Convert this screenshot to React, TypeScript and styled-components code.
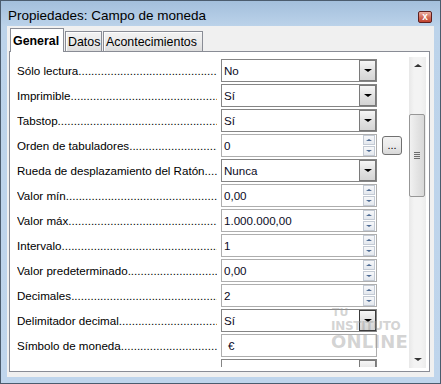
import styled, { createGlobalStyle, css } from 'styled-components';

const GlobalStyle = createGlobalStyle`
  html, body {
    margin: 0;
    padding: 0;
    background: #ffffff;
  }
  * {
    box-sizing: border-box;
  }
`;

const FONT = `'Liberation Sans', Arial, sans-serif`;

const Window = styled.div`
  width: 441px;
  height: 384px;
  border: 1px solid #4b5c6e;
  background: linear-gradient(#a3bfdc 0px, #bcd3ea 26px, #bfd5ec 100%);
  display: flex;
  flex-direction: column;
  font-family: ${FONT};
  font-size: 11.6px;
  color: #000;
  overflow: hidden;
`;

const TitleBar = styled.div`
  height: 25px;
  flex-shrink: 0;
  display: flex;
  align-items: center;
  padding: 0 8px 0 7px;
`;

const Title = styled.span`
  flex: 1;
  font-size: 13.5px;
  color: #000;
  padding-top: 4px;
`;

const CloseButton = styled.div`
  width: 14px;
  height: 12px;
  margin-top: 6px;
  border: 1px solid #5d1f1f;
  border-radius: 2px;
  background: linear-gradient(#eab0a4, #d26a56 55%, #c0432f);
  color: #fff;
  font-size: 10px;
  font-weight: bold;
  line-height: 10px;
  text-align: center;
`;

const Client = styled.div`
  flex: 1;
  min-height: 0;
  margin: 0 6px 6px 6px;
  background: #f0f0f0;
  padding: 2px 4px 5px 2px;
  display: flex;
  flex-direction: column;
`;

const Tabs = styled.div`
  display: flex;
  align-items: flex-end;
  height: 23px;
  flex-shrink: 0;
  padding-left: 1px;
  position: relative;
  z-index: 1;
`;

const Tab = styled.div<{ $active?: boolean; $w: number }>`
  width: ${({ $w }) => $w}px;
  border: 1px solid #898c95;
  border-bottom: none;
  display: flex;
  align-items: center;
  font-size: 12.4px;
  white-space: nowrap;
  ${({ $active }) =>
    $active
      ? css`
          height: 24px;
          margin-bottom: -1px;
          background: #fff;
          font-weight: bold;
          padding-left: 2px;
        `
      : css`
          height: 20px;
          padding-left: 1px;
          background: linear-gradient(#f2f2f2, #ebebeb 50%, #dddddd);
          box-shadow: inset 1px 1px 0 #fcfcfc;
          margin-left: -1px;
          & + & {
            margin-left: 1px;
            padding-left: 2px;
          }
        `}
`;

const Panel = styled.div`
  flex: 1;
  min-height: 0;
  border: 1px solid #898c95;
  background: #fff;
  display: flex;
  position: relative;
`;

const Rows = styled.div`
  flex: 1;
  overflow: hidden;
  padding: 7px 0 0 7px;
  margin-bottom: 4px;
  display: flex;
  flex-direction: column;
  gap: 2px;
`;

const Row = styled.div`
  display: flex;
  align-items: center;
  height: 23px;
  flex-shrink: 0;
`;

const Label = styled.div`
  width: 204px;
  padding-right: 4px;
  display: flex;
  white-space: nowrap;
  overflow: hidden;
`;

const Dots = styled.span`
  flex: 1;
  overflow: hidden;
`;

const Field = styled.div<{ $combo?: boolean }>`
  width: 156px;
  height: 23px;
  border: 1px solid ${({ $combo }) => ($combo ? '#858585' : '#aeaeae')};
  background: #fff;
  display: flex;
  align-items: center;
  padding-left: 2px;
`;

const Value = styled.span<{ $indent?: number }>`
  flex: 1;
  padding-left: ${({ $indent }) => $indent ?? 0}px;
  color: #0a0a1e;
  white-space: nowrap;
`;

const DropButton = styled.div<{ $dark?: boolean }>`
  width: 17px;
  height: 21px;
  border: 1px solid ${({ $dark }) => ($dark ? '#3c3c3c' : '#7a7a7a')};
  background: linear-gradient(#f6f6f6, #e2e2e2 50%, #d4d4d4);
  display: flex;
  align-items: center;
  justify-content: center;
`;

const TriangleDown = styled.span<{ $size?: number; $color?: string }>`
  width: 0;
  height: 0;
  border-left: ${({ $size }) => $size ?? 4}px solid transparent;
  border-right: ${({ $size }) => $size ?? 4}px solid transparent;
  border-top: ${({ $size }) => ($size ?? 4) - 1}px solid ${({ $color }) => $color ?? '#000'};
`;

const TriangleUp = styled.span<{ $size?: number; $color?: string }>`
  width: 0;
  height: 0;
  border-left: ${({ $size }) => $size ?? 4}px solid transparent;
  border-right: ${({ $size }) => $size ?? 4}px solid transparent;
  border-bottom: ${({ $size }) => ($size ?? 4) - 1}px solid ${({ $color }) => $color ?? '#000'};
`;

const SpinBox = styled.div`
  width: 12px;
  height: 21px;
  margin-right: 1px;
  display: flex;
  flex-direction: column;
  gap: 1px;
`;

const SpinHalf = styled.div`
  flex: 1;
  border: 1px solid #c3cad4;
  background: linear-gradient(#f7f8fa, #e4e8ee);
  display: flex;
  align-items: center;
  justify-content: center;
`;

const MoreButton = styled.div`
  width: 20px;
  height: 19px;
  margin-left: 5px;
  border: 1px solid #707070;
  border-radius: 3px;
  background: linear-gradient(#f2f2f2, #ebebeb 50%, #d8d8d8);
  display: flex;
  align-items: flex-end;
  justify-content: center;
  padding-bottom: 3px;
  font-size: 11px;
  line-height: 11px;
`;

const ScrollBar = styled.div`
  width: 17px;
  margin: 5px 3px 3px 0;
  background: linear-gradient(90deg, #e8e8e8, #f3f3f3 30%, #f3f3f3 70%, #ececec);
  display: flex;
  flex-direction: column;
  align-items: stretch;
`;

const ScrollArrow = styled.div`
  height: 17px;
  display: flex;
  align-items: center;
  justify-content: center;
`;

const ScrollTrack = styled.div`
  flex: 1;
  padding-top: 40px;
`;

const Thumb = styled.div`
  height: 83px;
  margin-right: 1px;
  border: 1px solid #979797;
  border-radius: 2px;
  background: linear-gradient(90deg, #f1f1f1, #e4e4e4 50%, #d8d8d8);
  display: flex;
  flex-direction: column;
  align-items: center;
  justify-content: center;
  gap: 1px;
`;

const Grip = styled.span`
  width: 6px;
  height: 1px;
  background: #6e6e6e;
`;

const Watermark = styled.div`
  position: absolute;
  left: 321px;
  top: 255px;
  color: rgba(150, 150, 150, 0.42);
  font-family: 'DejaVu Sans', ${FONT};
  font-weight: bold;
  pointer-events: none;
`;

const WmSmall = styled.div`
  font-size: 11px;
  line-height: 12px;
  margin-left: 1px;
`;

const WmMid = styled.div`
  font-size: 12px;
  line-height: 14px;
  letter-spacing: -0.3px;
`;

const WmBig = styled.div`
  font-size: 18px;
  line-height: 18px;
  letter-spacing: 0.2px;
`;

type Kind = 'combo' | 'spin' | 'text';

interface Prop {
  label: string;
  value: string;
  kind: Kind;
  more?: boolean;
  dark?: boolean;
}

const props: Prop[] = [
  { label: 'Sólo lectura', value: 'No', kind: 'combo' },
  { label: 'Imprimible', value: 'Sí', kind: 'combo' },
  { label: 'Tabstop', value: 'Sí', kind: 'combo' },
  { label: 'Orden de tabuladores', value: '0', kind: 'spin', more: true },
  { label: 'Rueda de desplazamiento del Ratón', value: 'Nunca', kind: 'combo' },
  { label: 'Valor mín', value: '0,00', kind: 'spin' },
  { label: 'Valor máx', value: '1.000.000,00', kind: 'spin' },
  { label: 'Intervalo', value: '1', kind: 'spin' },
  { label: 'Valor predeterminado', value: '0,00', kind: 'spin' },
  { label: 'Decimales', value: '2', kind: 'spin' },
  { label: 'Delimitador decimal', value: 'Sí', kind: 'combo', dark: true },
  { label: 'Símbolo de moneda', value: '€', kind: 'text' },
  { label: 'Posición del símbolo', value: 'No', kind: 'combo' },
];

const DOTS = '.'.repeat(120);

const Control = ({ p }: { p: Prop }) => (
  <Field $combo={p.kind === 'combo'}>
    <Value $indent={p.kind === 'text' ? 4 : 0}>{p.value}</Value>
    {p.kind === 'combo' && (
      <DropButton $dark={p.dark}>
        <TriangleDown $size={4} />
      </DropButton>
    )}
    {p.kind === 'spin' && (
      <SpinBox>
        <SpinHalf>
          <TriangleUp $size={3} $color="#4c6a94" />
        </SpinHalf>
        <SpinHalf>
          <TriangleDown $size={3} $color="#4c6a94" />
        </SpinHalf>
      </SpinBox>
    )}
  </Field>
);

const App = () => {
  return (
    <>
      <GlobalStyle />
      <Window>
        <TitleBar>
          <Title>Propiedades: Campo de moneda</Title>
          <CloseButton>x</CloseButton>
        </TitleBar>
        <Client>
          <Tabs>
            <Tab $active $w={54}>General</Tab>
            <Tab $w={37}>Datos</Tab>
            <Tab $w={100}>Acontecimientos</Tab>
          </Tabs>
          <Panel>
            <Rows>
              {props.map(p => (
                <Row key={p.label}>
                  <Label>
                    {p.label}
                    <Dots>{DOTS}</Dots>
                  </Label>
                  <Control p={p} />
                  {p.more && <MoreButton>...</MoreButton>}
                </Row>
              ))}
            </Rows>
            <ScrollBar>
              <ScrollArrow>
                <TriangleUp $size={4} $color="#333" />
              </ScrollArrow>
              <ScrollTrack>
                <Thumb>
                  <Grip />
                  <Grip />
                  <Grip />
                  <Grip />
                </Thumb>
              </ScrollTrack>
              <ScrollArrow>
                <TriangleDown $size={4} $color="#333" />
              </ScrollArrow>
            </ScrollBar>
            <Watermark>
              <WmSmall>TU</WmSmall>
              <WmMid>INSTITUTO</WmMid>
              <WmBig>ONLINE</WmBig>
            </Watermark>
          </Panel>
        </Client>
      </Window>
    </>
  );
};

export default App;
